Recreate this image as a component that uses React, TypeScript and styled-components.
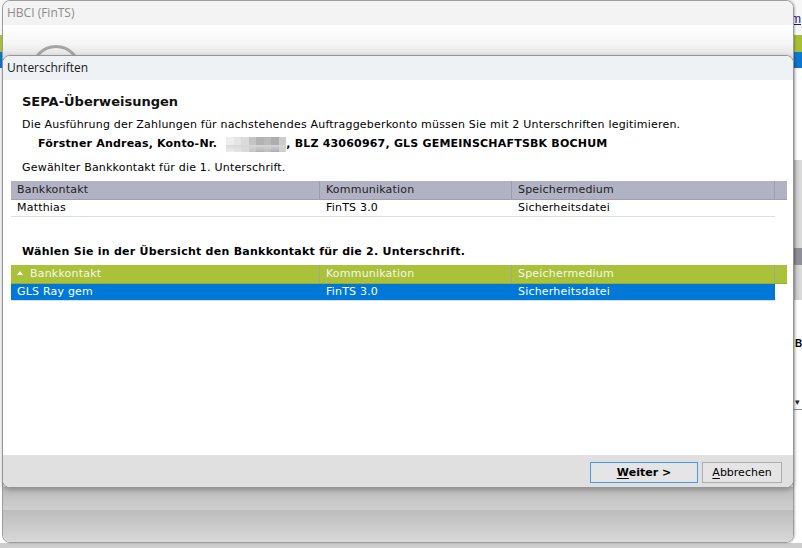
import React from 'react'
import styled, { createGlobalStyle } from 'styled-components'

const GlobalStyle = createGlobalStyle`
    html, body {
        margin: 0;
        padding: 0;
        overflow: hidden;
    }
    body {
        font-family: 'DejaVu Sans', Verdana, sans-serif;
    }
`

const blurCells = [
    '#ececec', '#e2e2e2', '#d6d6d6', '#bdbdbd', '#a9a9a9', '#b3b3b3', '#a4a4a4', '#c6c6c6',
]

interface Contact {
    name: string
    channel: string
    medium: string
}

const firstSigner: Contact[] = [{ name: 'Matthias', channel: 'FinTS 3.0', medium: 'Sicherheitsdatei' }]
const secondSigner: Contact[] = [{ name: 'GLS Ray gem', channel: 'FinTS 3.0', medium: 'Sicherheitsdatei' }]

const SignTable = ({
    rows,
    variant,
    sorted,
}: {
    rows: Contact[]
    variant: 'plain' | 'active'
    sorted?: boolean
}) => (
    <Table>
        <HeadRow $variant={variant}>
            <HeadCell $variant={variant}>
                {sorted && <SortArrow />}
                Bankkontakt
            </HeadCell>
            <HeadCell $variant={variant}>Kommunikation</HeadCell>
            <HeadCell $variant={variant}>Speichermedium</HeadCell>
            <HeadCell $variant={variant} />
        </HeadRow>
        {rows.map((r) => (
            <Row key={r.name} $selected={variant === 'active'}>
                <Cell>{r.name}</Cell>
                <Cell>{r.channel}</Cell>
                <Cell>{r.medium}</Cell>
            </Row>
        ))}
    </Table>
)

const App = () => {
    return (
        <>
            <GlobalStyle />
            <Desktop>
                <BackApp>
                    <BackTop>
                        <BackLink>m</BackLink>
                    </BackTop>
                    <GreenBar />
                    <BlueBar />
                    <BackBody>
                        <SideStrip>
                            <SideGap />
                            <ScrollTrack>
                                <ScrollThumb />
                            </ScrollTrack>
                            <SidePane>
                                <SideLetter>B</SideLetter>
                                <SideCaret>▾</SideCaret>
                            </SidePane>
                        </SideStrip>
                    </BackBody>
                    <StatusBar />
                </BackApp>

                <OuterWindow>
                    <OuterTitle>HBCI (FinTS)</OuterTitle>
                    <OuterHero>
                        <Ring />
                    </OuterHero>
                    <OuterBand $from='#bababa' $to='#d0d0d0' $h={23} />
                    <OuterBand $from='#bdbdbd' $to='#d8d8d8' $h={32} />
                </OuterWindow>

                <Dialog>
                    <DialogTitle>Unterschriften</DialogTitle>
                    <DialogBody>
                        <Heading>SEPA-Überweisungen</Heading>
                        <Text $top={6}>
                            Die Ausführung der Zahlungen für nachstehendes Auftraggeberkonto müssen Sie mit 2
                            Unterschriften legitimieren.
                        </Text>
                        <AccountLine>
                            Förstner Andreas, Konto-Nr.{' '}
                            <Blur>
                                {blurCells.map((c, i) => (
                                    <BlurCell key={i} $c={c} />
                                ))}
                            </Blur>
                            , BLZ 43060967, GLS GEMEINSCHAFTSBK BOCHUM
                        </AccountLine>
                        <Text $top={8}>Gewählter Bankkontakt für die 1. Unterschrift.</Text>
                        <SignTable rows={firstSigner} variant='plain' />
                        <Prompt>Wählen Sie in der Übersicht den Bankkontakt für die 2. Unterschrift.</Prompt>
                        <SignTable rows={secondSigner} variant='active' sorted />
                    </DialogBody>
                    <DialogFooter>
                        <Button $primary $w={108}>
                            <u>W</u>eiter &gt;
                        </Button>
                        <Button $w={80}>
                            <u>A</u>bbrechen
                        </Button>
                    </DialogFooter>
                </Dialog>
            </Desktop>
        </>
    )
}

const Desktop = styled.div`
    position: relative;
    width: 802px;
    height: 548px;
    overflow: hidden;
    background: #d0d0d0;
`

/* application behind the windows */
const BackApp = styled.div`
    width: 802px;
    height: 548px;
    display: flex;
    flex-direction: column;
`
const BackTop = styled.div`
    height: 35px;
    background: #f7f7f7;
    display: flex;
    justify-content: flex-end;
    align-items: center;
    padding-right: 1px;
`
const BackLink = styled.span`
    font-family: 'Liberation Sans', Arial, sans-serif;
    font-size: 12px;
    color: #1a0dab;
    text-decoration: underline;
    margin-top: 2px;
`
const GreenBar = styled.div`
    height: 17px;
    background: #a6bf35;
`
const BlueBar = styled.div`
    height: 16px;
    background: #0a78d3;
`
const BackBody = styled.div`
    flex: 1;
    background: #ffffff;
    display: flex;
    justify-content: flex-end;
`
const SideStrip = styled.div`
    width: 8px;
    display: flex;
    flex-direction: column;
`
const SideGap = styled.div`
    height: 92px;
    background: #ffffff;
`
const ScrollTrack = styled.div`
    height: 140px;
    background: linear-gradient(90deg, #c8c8c8, #dcdcdc);
    padding-top: 88px;
    box-sizing: border-box;
`
const ScrollThumb = styled.div`
    height: 17px;
    background: #8f8f98;
`
const SidePane = styled.div`
    flex: 1;
    background: #ffffff;
    padding-top: 38px;
    overflow: hidden;
`
const SideLetter = styled.div`
    font-family: 'Liberation Sans', Arial, sans-serif;
    font-weight: bold;
    font-size: 10px;
    color: #000;
    padding-left: 1px;
`
const SideCaret = styled.div`
    font-size: 9px;
    color: #222;
    margin-top: 48px;
    padding-left: 1px;
    border-bottom: 1px solid #888;
    padding-bottom: 2px;
`
const StatusBar = styled.div`
    height: 5px;
    background: #cdcdcd;
`

/* outer HBCI window, dimmed behind the dialog */
const OuterWindow = styled.div`
    position: absolute;
    left: 2px;
    top: 0;
    width: 792px;
    height: 543px;
    box-sizing: border-box;
    border: 1px solid #9c9c9c;
    border-radius: 8px;
    overflow: hidden;
    display: flex;
    flex-direction: column;
    box-shadow: 1px 0 2px rgba(0, 0, 0, 0.25);
`
const OuterTitle = styled.div`
    height: 24px;
    flex: none;
    background: #f3f3f3;
    color: #8c8c8c;
    font-family: 'Open Sans', 'Noto Sans', sans-serif;
    font-size: 12px;
    line-height: 24px;
    padding-left: 4px;
`
const OuterHero = styled.div`
    flex: 1;
    background: linear-gradient(180deg, #ffffff 0px, #f6f6f6 18px, #e2e2e2 32px, #dedede 100%);
    padding: 20px 0 0 28px;
`
const Ring = styled.div`
    width: 44px;
    height: 44px;
    border-radius: 50%;
    border: 3px solid #a4a4a4;
`
const OuterBand = styled.div<{ $from: string; $to: string; $h: number }>`
    height: ${(p) => p.$h}px;
    flex: none;
    background: linear-gradient(180deg, ${(p) => p.$from}, ${(p) => p.$to});
`

/* Unterschriften dialog */
const Dialog = styled.div`
    position: absolute;
    left: 2px;
    top: 55px;
    width: 792px;
    height: 433px;
    box-sizing: border-box;
    border: 1px solid #959595;
    border-radius: 8px;
    overflow: hidden;
    display: flex;
    flex-direction: column;
    background: #ffffff;
    box-shadow: 0 2px 5px rgba(0, 0, 0, 0.25);
`
const DialogTitle = styled.div`
    height: 24px;
    flex: none;
    background: #eef2f5;
    color: #1a1a1a;
    font-family: 'Open Sans', 'Noto Sans', sans-serif;
    font-size: 12px;
    line-height: 24px;
    padding-left: 4px;
`
const DialogBody = styled.div`
    flex: 1;
    padding: 13px 0 0 8px;
    color: #000;
    font-size: 11px;
    letter-spacing: 0.2px;
`
const Heading = styled.div`
    font-size: 13px;
    font-weight: bold;
    line-height: 18px;
    margin-left: 11px;
    color: #111;
    letter-spacing: 0;
`
const Text = styled.div<{ $top: number }>`
    line-height: 16px;
    margin: ${(p) => p.$top}px 0 0 11px;
    white-space: nowrap;
`
const AccountLine = styled.div`
    font-weight: bold;
    line-height: 16px;
    margin: 3px 0 0 27px;
    white-space: nowrap;
    display: flex;
    align-items: center;
`
const Blur = styled.span`
    display: inline-flex;
    width: 60px;
    height: 15px;
    margin: 0 0 0 9px;
`
const BlurCell = styled.span<{ $c: string }>`
    flex: 1;
    background: linear-gradient(180deg, ${(p) => p.$c} 50%, #d4d4d4 50%, ${(p) => p.$c} 100%);
    opacity: 0.9;
`
const Prompt = styled.div`
    font-weight: bold;
    line-height: 16px;
    margin: 27px 0 0 11px;
    letter-spacing: 0.26px;
`
const Table = styled.div`
    margin-top: 5px;
    width: 776px;
`
const HeadRow = styled.div<{ $variant: string }>`
    display: grid;
    grid-template-columns: 309px 192px 263px 12px;
    height: 19px;
    box-sizing: border-box;
    background: ${(p) => (p.$variant === 'active' ? '#a9c23a' : '#b1b3c4')};
    border-bottom: 1px solid ${(p) => (p.$variant === 'active' ? '#97ac35' : '#9c9eae')};
`
const HeadCell = styled.div<{ $variant: string }>`
    display: flex;
    align-items: center;
    padding-left: 6px;
    line-height: 18px;
    color: ${(p) => (p.$variant === 'active' ? '#f4f7ea' : '#1e1e1e')};
    border-right: 1px solid ${(p) => (p.$variant === 'active' ? '#a3a79a' : '#9c9eae')};
    white-space: nowrap;
    &:last-child {
        border-right: none;
    }
`
const SortArrow = styled.span`
    width: 0;
    height: 0;
    border-left: 3px solid transparent;
    border-right: 3px solid transparent;
    border-bottom: 4px solid #ffffff;
    margin: 0 7px 2px 0;
`
const Row = styled.div<{ $selected?: boolean }>`
    display: grid;
    grid-template-columns: 309px 192px 263px;
    width: 764px;
    height: 17px;
    box-sizing: border-box;
    background: ${(p) => (p.$selected ? '#0078d7' : '#ffffff')};
    color: ${(p) => (p.$selected ? '#ffffff' : '#000000')};
    border-bottom: 1px solid #dedede;
`
const Cell = styled.div`
    padding-left: 6px;
    line-height: 16px;
    white-space: nowrap;
`
const DialogFooter = styled.div`
    height: 32px;
    flex: none;
    background: #e0e0e0;
    display: flex;
    justify-content: flex-end;
    align-items: flex-start;
    gap: 4px;
    padding: 7px 11px 0 0;
    box-sizing: border-box;
`
const Button = styled.div<{ $primary?: boolean; $w: number }>`
    width: ${(p) => p.$w}px;
    height: 21px;
    box-sizing: border-box;
    border: 1px solid ${(p) => (p.$primary ? '#3d9bf0' : '#adadad')};
    background: #e5e5e5;
    display: flex;
    align-items: center;
    justify-content: center;
    font-size: 11px;
    font-weight: ${(p) => (p.$primary ? 'bold' : 'normal')};
    color: #000;
    u {
        text-underline-offset: 2px;
    }
`

export default App
